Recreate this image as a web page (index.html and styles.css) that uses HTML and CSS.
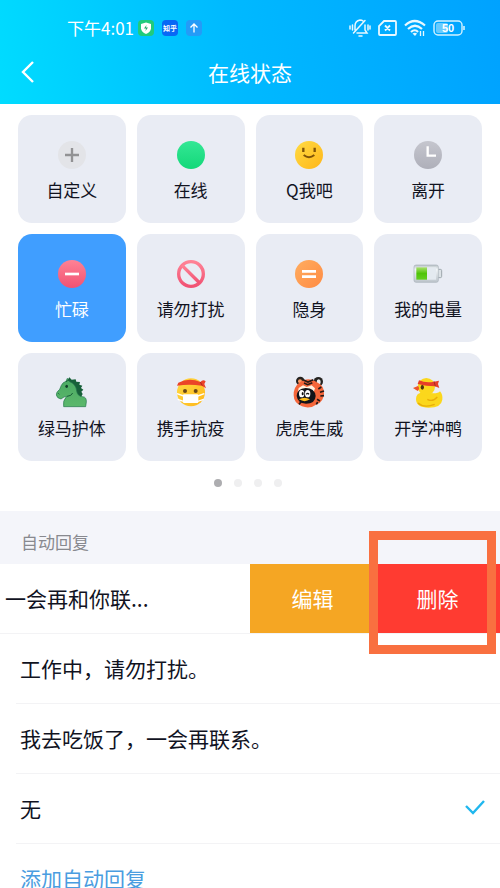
FILE: index.html
```html
<!DOCTYPE html>
<html lang="zh-CN">
<head>
    <meta charset="UTF-8">
    <meta name="viewport" content="width=device-width, initial-scale=1.0">
    <title>在线状态</title>
    <link rel="stylesheet" href="styles.css">
</head>
<body>
    <header class="header">
        <div class="status-bar">
            <div class="status-left">
                <span class="time">下午4:01</span>
                <svg class="app-icon" viewBox="0 0 16 16">
                    <rect width="16" height="16" rx="4" fill="#20cb7c"/>
                    <path d="M8 2.500l5 1.500v4.500Q12.500 12 8 14Q3.500 12 3 8.500v-4.500z" fill="#fff"/>
                    <path d="M8.500 5L6 8.500h2L7.500 11L10 7.500H8z" fill="#20a969"/>
                </svg>
                <svg class="app-icon" viewBox="0 0 16 16">
                    <rect width="16" height="16" rx="4" fill="#0868f5"/>
                    <text class="zhihu" x="8" y="11" text-anchor="middle">知乎</text>
                </svg>
                <svg class="app-icon" viewBox="0 0 16 16">
                    <rect width="16" height="16" rx="4" fill="#249bf7"/>
                    <path d="M8 12.500V4M4.500 7.500L8 4l3.500 3.500" fill="none" stroke="#fff" stroke-width="1.300"/>
                </svg>
            </div>
            <div class="status-right">
                <svg width="22" height="20" viewBox="0 0 22 20" fill="none" stroke="#e8f8ff" stroke-width="1.500" stroke-linecap="round">
                    <path d="M4.500 15L16 2.500M6 12V8q0-5 5-6 2 0 3 1M16 7v5l2 3H8M10 18h3M1 8v3M3.500 7v5M19 7v5M21 8v3"/>
                </svg>
                <svg width="19" height="16" viewBox="0 0 19 16" fill="none" stroke="#e8f8ff" stroke-width="1.800">
                    <path d="M6 1h11q1 0 1 1v12q0 1-1 1H2q-1 0-1-1V6zM7 5.500l5 5M12 5.500l-5 5"/>
                </svg>
                <svg width="22" height="18" viewBox="0 0 22 18" fill="none" stroke="#e8f8ff" stroke-width="2.200">
                    <path d="M1 6.500q9.500-9 20 0M4 10q7-6.500 14 0M7 13q4-3.500 7 0"/>
                    <path d="M8.500 14.500L11 17l2-2.500q-2-1.500-4.500 0z" fill="#e8f8ff" stroke="none"/>
                    <path d="M16.500 12v5M19.500 12v5" stroke-width="1.300"/>
                </svg>
                <svg width="32" height="16" viewBox="0 0 32 16">
                    <rect x="3" y="3" width="12" height="10" rx="2" fill="#68cbff"/>
                    <rect x="1" y="1" width="28" height="14" rx="4" fill="none" stroke="#d4f2ff" stroke-width="1.400"/>
                    <path d="M31 6v4" stroke="#d4f2ff" stroke-width="1.600"/>
                    <text class="battery-level" x="15" y="12" text-anchor="middle">50</text>
                </svg>
            </div>
        </div>
        <nav class="nav">
            <button class="back" aria-label="返回">
                <svg width="14" height="24" viewBox="0 0 14 24"><path d="M12 2L2 12l10 10" fill="none" stroke="#fff" stroke-width="2.400"/></svg>
            </button>
            <h1 class="title">在线状态</h1>
        </nav>
    </header>

    <main>
        <section class="status-grid">
            <button class="card">
                <svg class="icon" viewBox="0 0 96 96">
                    <circle cx="48" cy="48" r="42" fill="#e3e4e8"/>
                    <path d="M48 27v42M27 48h42" stroke="#929294" stroke-width="7"/>
                </svg>
                <span>自定义</span>
            </button>
            <button class="card">
                <svg class="icon" viewBox="0 0 96 96">
                    <linearGradient id="green" x2="0" y2="1"><stop stop-color="#34e795"/><stop offset="1" stop-color="#13d879"/></linearGradient>
                    <circle cx="48" cy="48" r="42" fill="url(#green)"/>
                </svg>
                <span>在线</span>
            </button>
            <button class="card">
                <svg class="icon" viewBox="0 0 96 96">
                    <linearGradient id="yellow" x2="1" y2="1"><stop stop-color="#ffdb43"/><stop offset="1" stop-color="#ffb619"/></linearGradient>
                    <circle cx="48" cy="48" r="42" fill="url(#yellow)"/>
                    <path d="M31 26v13M65 26v13" stroke="#805408" stroke-width="7"/>
                    <path d="M32 48q16 13 32 0" fill="none" stroke="#805408" stroke-width="6"/>
                </svg>
                <span>Q我吧</span>
            </button>
            <button class="card">
                <svg class="icon" viewBox="0 0 96 96">
                    <linearGradient id="gray" x2="0" y2="1"><stop stop-color="#c5c6ce"/><stop offset="1" stop-color="#aeafb9"/></linearGradient>
                    <circle cx="48" cy="48" r="42" fill="url(#gray)"/>
                    <path d="M47 22v28h25" fill="none" stroke="#fff" stroke-width="7"/>
                </svg>
                <span>离开</span>
            </button>

            <button class="card card-active" aria-pressed="true">
                <svg class="icon" viewBox="0 0 96 96">
                    <linearGradient id="pink" x2="0" y2="1"><stop stop-color="#ff8295"/><stop offset="1" stop-color="#f15273"/></linearGradient>
                    <circle cx="48" cy="48" r="42" fill="url(#pink)"/>
                    <path d="M27 48h42" stroke="#fff" stroke-width="8"/>
                </svg>
                <span>忙碌</span>
            </button>
            <button class="card">
                <svg class="icon" viewBox="0 0 96 96">
                    <g fill="none" stroke="url(#pink)" stroke-width="10"><circle cx="48" cy="48" r="37"/><path d="M21 22l53 53"/></g>
                </svg>
                <span>请勿打扰</span>
            </button>
            <button class="card">
                <svg class="icon" viewBox="0 0 96 96">
                    <linearGradient id="orange" x2="1" y2="1"><stop stop-color="#ffad60"/><stop offset="1" stop-color="#ff8b43"/></linearGradient>
                    <circle cx="48" cy="48" r="42" fill="url(#orange)"/>
                    <path d="M27 40h42M27 56h42" stroke="#fff" stroke-width="8"/>
                </svg>
                <span>隐身</span>
            </button>
            <button class="card">
                <svg class="icon" viewBox="0 0 96 96">
                    <linearGradient id="metal" x2="0" y2="1"><stop stop-color="#b9c2c6"/><stop offset=".25" stop-color="#f2f6f9"/><stop offset="1" stop-color="#bcc4cb"/></linearGradient>
                    <linearGradient id="charge" x2="0" y2="1"><stop stop-color="#a9df6b"/><stop offset=".5" stop-color="#4fc408"/><stop offset="1" stop-color="#63cf20"/></linearGradient>
                    <rect x="76" y="34" width="13" height="25" rx="4" fill="#dce2e6" stroke="#9da7ad" stroke-width="3"/>
                    <rect x="6" y="21" width="73" height="52" rx="6" fill="url(#metal)" stroke="#a8b1b8" stroke-width="2"/>
                    <rect x="13" y="28" width="32" height="37" fill="url(#charge)"/>
                    <path d="M45 28h27v37H45z" fill="#e4eaf0"/>
                </svg>
                <span>我的电量</span>
            </button>

            <button class="card">
                <svg class="icon" viewBox="0 0 96 96">
                    <linearGradient id="horse" x2="0" y2="1"><stop stop-color="#4ba963"/><stop offset="1" stop-color="#5bb86b"/></linearGradient>
                    <path d="M34 10L40 1l7 7 12-1 2 7 11 1-2 8 9 3-4 7 7 5-6 6 4 7-6 11-20-5-17-28z" fill="#176039"/>
                    <path d="M30 13l4-9 7 10q19 7 21 28 2 16 18 17 12 1 11 16l-2 14H23q-4-17 9-31l-8 2-9 6Q3 64 1 54q-1-8 10-17l5-12q4-9 14-12z" fill="url(#horse)" stroke="#23764b" stroke-width="2"/>
                    <path d="M33 58q14-1 17-10M7 49l3 3M30 14q5-4 10-5" fill="none" stroke="#185d38" stroke-width="3"/>
                    <ellipse cx="32" cy="28" rx="4" ry="5" fill="#113f29"/>
                </svg>
                <span>绿马护体</span>
            </button>
            <button class="card">
                <svg class="icon" viewBox="0 0 96 96">
                    <circle cx="48" cy="46" r="42" fill="url(#yellow)"/>
                    <circle cx="30" cy="42" r="6" fill="#694815"/>
                    <circle cx="62" cy="42" r="6" fill="#694815"/>
                    <path d="M10 17Q42 1 76 15q8-9 16-2l-4 8 5 13-13-8q-37-5-74 0z" fill="#eb4328"/>
                    <path d="M76 15l6 11" stroke="#aa291b" stroke-width="3"/>
                    <path d="M6 50l20 7M8 67l20 7M68 57l20-7M66 74l20-7" stroke="#fff" stroke-width="4"/>
                    <rect x="24" y="52" width="46" height="26" rx="3" fill="#fff"/>
                </svg>
                <span>携手抗疫</span>
            </button>
            <button class="card">
                <svg class="icon" viewBox="0 0 96 96">
                    <circle cx="22" cy="12" r="13" fill="#24221f"/>
                    <circle cx="76" cy="14" r="14" fill="#24221f"/>
                    <circle cx="21" cy="13" r="6" fill="#ff9b64"/>
                    <ellipse cx="77" cy="15" rx="6" ry="8" fill="#eee"/>
                    <path d="M18 18Q46-4 74 17q20 9 19 33-2 24-20 31-21 16-46 7Q2 78 2 55 1 31 18 18z" fill="#f5663a"/>
                    <path d="M31 9l14 6 16-7M33 18l11 5 14-6M85 30l-9 6M93 42l-12 4M93 56l-11 1M18 82l7-8M72 67l9 5M70 82l4-7" fill="none" stroke="#251a18" stroke-width="5"/>
                    <path d="M17 33l13-8 11 5 15-5 10 9-3 9H15z" fill="#fff0df"/>
                    <path d="M11 57q1-22 27-24 27 0 30 24-1 23-29 23-25-1-28-23z" fill="#111319"/>
                    <ellipse cx="26" cy="50" rx="8" ry="11" fill="#fff"/>
                    <ellipse cx="44" cy="50" rx="8" ry="11" fill="#fff"/>
                    <ellipse cx="29" cy="50" rx="3" ry="5" fill="#111"/>
                    <path d="M40 52q4-6 8 0" fill="none" stroke="#111" stroke-width="4"/>
                    <path d="M18 67q16-9 33 0-16 11-33 0z" fill="#ffbd19"/>
                </svg>
                <span>虎虎生威</span>
            </button>
            <button class="card">
                <svg class="icon" viewBox="0 0 96 96">
                    <path d="M12 66q0-16 15-19l38 2q14 0 19-6 9 10 7 25-3 24-41 24-38 0-38-26z" fill="#fbd71c"/>
                    <circle cx="43" cy="29" r="26" fill="#fbd71c"/>
                    <path d="M46 67q16 9 30-7M18 78q18 16 50 4" fill="none" stroke="#e9ae08" stroke-width="4"/>
                    <path d="M18 27L3 33l14 9q8-7 1-15z" fill="#ed552d"/>
                    <ellipse cx="31" cy="31" rx="5" ry="7" fill="#50360e"/>
                    <path d="M21 10q21 9 45 4l15-3-3 10 4 12-13-5q-26 0-52-7z" fill="#e73e28"/>
                    <path d="M66 13l4 15" stroke="#a92c20" stroke-width="3"/>
                </svg>
                <span>开学冲鸭</span>
            </button>
        </section>

        <div class="pager">
            <span class="dot dot-active"></span>
            <span class="dot"></span>
            <span class="dot"></span>
            <span class="dot"></span>
        </div>

        <h2 class="section-title">自动回复</h2>
        <div class="swipe-row">
            <button class="swipe-text">一会再和你联...</button>
            <button class="btn-edit">编辑</button>
            <div class="delete-wrap">
                <button class="btn-delete">删除</button>
                <div class="highlight"></div>
            </div>
        </div>
        <div class="reply-list">
            <button class="reply">工作中，请勿打扰。</button>
            <button class="reply">我去吃饭了，一会再联系。</button>
            <button class="reply" aria-pressed="true">
                <span>无</span>
                <svg width="20" height="15" viewBox="0 0 20 15"><path d="M1 6l7 7L19 1" fill="none" stroke="#20b7ee" stroke-width="2.400"/></svg>
            </button>
            <button class="reply reply-add">添加自动回复</button>
        </div>
    </main>
</body>
</html>
```
FILE: styles.css
```css
* {
    box-sizing: border-box;
}
html {
    scrollbar-width: none;
}
body {
    margin: 0;
    background: #fff;
    color: #11131f;
    font-family: "Noto Sans CJK SC", sans-serif;
}
button {
    margin: 0;
    padding: 0;
    border: 0;
    background: none;
    color: inherit;
    font-family: inherit;
    cursor: pointer;
}
svg {
    display: block;
    flex-shrink: 0;
}

/* Header */
.header {
    padding-bottom: 16px;
    background: linear-gradient(80deg, #00dcff 0%, #00b9ff 48%, #00a2ff 100%);
    color: #fff;
}
.status-bar {
    display: flex;
    align-items: center;
    justify-content: space-between;
    height: 56px;
    padding: 0 35px 0 67px;
}
.status-left {
    display: flex;
    align-items: center;
    gap: 8px;
}
.status-right {
    display: flex;
    align-items: center;
    gap: 7px;
}
.time {
    font-size: 17px;
    line-height: 24px;
    margin-right: -4px;
}
.app-icon {
    width: 16px;
    height: 16px;
}
.zhihu {
    font-size: 7px;
    font-weight: bold;
    fill: #fff;
}
.battery-level {
    font-family: "Liberation Sans", sans-serif;
    font-size: 11px;
    font-weight: bold;
    fill: #fff;
}
.nav {
    display: grid;
    grid-template-columns: 40px 1fr 40px;
    align-items: center;
    height: 32px;
}
.back {
    display: flex;
    align-items: center;
    height: 32px;
    padding-left: 21px;
}
.title {
    margin: 0;
    font-size: 21px;
    font-weight: normal;
    line-height: 30px;
    text-align: center;
}

/* Status cards */
.status-grid {
    display: grid;
    grid-template-columns: repeat(4, 1fr);
    gap: 11px;
    padding: 11px 18px 18px;
}
.card {
    display: flex;
    flex-direction: column;
    align-items: center;
    gap: 7px;
    padding: 24px 0 21px;
    border-radius: 14px;
    background: #e9ecf4;
    font-size: 17px;
    line-height: 24px;
}
.card-active {
    background: #409eff;
    color: #fff;
}
.icon {
    width: 32px;
    height: 32px;
    overflow: visible;
}
.pager {
    display: flex;
    justify-content: center;
    gap: 12px;
    padding-bottom: 24px;
    margin-left: -5px;
}
.dot {
    width: 8px;
    height: 8px;
    border-radius: 50%;
    background: #efeff0;
}
.dot-active {
    background: #adadb0;
}

/* Auto reply */
.section-title {
    margin: 0;
    padding: 19px 21px 10px;
    background: #f4f5fa;
    color: #88898f;
    font-size: 17px;
    font-weight: normal;
    line-height: 24px;
}
.swipe-row {
    display: grid;
    grid-template-columns: 2fr 1fr 1fr;
    height: 70px;
    border-bottom: 1px solid #f3f3f5;
}
.swipe-text,
.btn-edit,
.btn-delete {
    padding-bottom: 2px;
    font-size: 21px;
    line-height: 24px;
}
.swipe-text {
    padding-left: 5px;
    text-align: left;
    white-space: nowrap;
}
.btn-edit {
    background: #f5a623;
    color: #fff;
}
.delete-wrap {
    position: relative;
    display: flex;
}
.btn-delete {
    flex: 1;
    background: #ff3b31;
    color: #fff;
}
.highlight {
    position: absolute;
    top: -33px;
    right: 4px;
    bottom: -21px;
    left: -6px;
    border: 9px solid #f97040;
    pointer-events: none;
}
.reply-list {
    display: flex;
    flex-direction: column;
    padding-left: 16px;
}
.reply {
    display: flex;
    align-items: center;
    justify-content: space-between;
    height: 70px;
    padding: 0 15px 2px 4px;
    border-bottom: 1px solid #f3f3f5;
    font-size: 21px;
    line-height: 24px;
    text-align: left;
}
.reply-add {
    border-bottom: 0;
    color: #4a9de0;
}
```
